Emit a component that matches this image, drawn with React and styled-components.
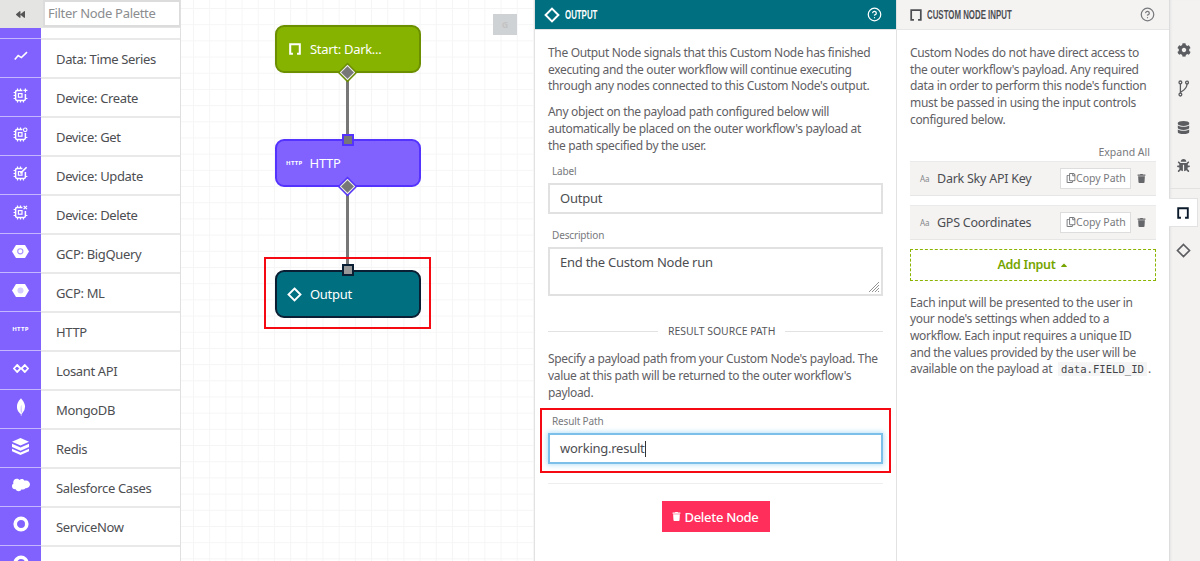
import React from 'react';
import styled, { createGlobalStyle } from 'styled-components';
import { FaCog, FaDatabase, FaBug, FaTrash, FaRegCopy, FaCaretUp, FaBackward } from 'react-icons/fa';
import { SiMongodb, SiSalesforce } from 'react-icons/si';
import { LuCircleHelp } from 'react-icons/lu';

const FONT = '"Noto Sans", "Open Sans", sans-serif';

const GlobalStyle = createGlobalStyle`
  html, body { margin: 0; padding: 0; height: 561px; overflow: hidden; background: #fff; }
  * { box-sizing: border-box; }
  body { font-family: ${FONT}; color: #55565a; }
`;

const Page = styled.div`
  display: grid;
  grid-template-columns: 181px 354px 362px 272px 31px;
  height: 561px;
  overflow: hidden;
`;

/* palette */
const Palette = styled.aside`
  display: flex;
  flex-direction: column;
  height: 561px;
  overflow: hidden;
  border-right: 1px solid #e0e0e0;
`;

const PaletteHead = styled.div`
  display: flex;
  flex: none;
  height: 28px;
  background: #e4e4e3;
`;

const Collapse = styled.div`
  display: flex;
  align-items: center;
  justify-content: center;
  width: 41px;
  color: #555;
  font-size: 9px;
`;

const Filter = styled.div`
  flex: 1;
  margin: 0 0 1px 2px;
  padding-left: 3px;
  background: #fff;
  border: 2px solid #dcdcdc;
  border-right-width: 1px;
  font-size: 13px;
  letter-spacing: -0.3px;
  line-height: 23px;
  color: #8b8d8f;
`;

const Stub = styled.div`
  flex: none;
  height: 10px;
  background: linear-gradient(to right, #8162ff 41px, #fff 41px);
`;

const Item = styled.div`
  display: flex;
  flex: none;
  height: 39px;
`;

const ItemIcon = styled.div`
  display: flex;
  align-items: center;
  justify-content: center;
  flex: none;
  width: 41px;
  padding-bottom: 4px;
  background: #8162ff;
  border-top: 1px solid #c4b6ff;
  color: #fff;
`;

const ItemLabel = styled.div`
  flex: 1;
  padding: 0 0 0 15px;
  border-top: 2px solid #e9e9e9;
  font-size: 13px;
  letter-spacing: -0.35px;
  line-height: 39px;
  color: #4d4e52;
`;

const HttpMark = styled.span`
  font-size: 6px;
  font-weight: 700;
  letter-spacing: 0.3px;
  color: #fff;
`;

/* canvas */
const Canvas = styled.main`
  position: relative;
  background-color: #fff;
  background-image:
    linear-gradient(#f5f5f5 1px, transparent 1px),
    linear-gradient(90deg, #f5f5f5 1px, transparent 1px);
  background-size: 16.2px 16.2px;
  background-position: 12px 8px;
  border-right: 1px solid #e2e2e2;
`;

const Node = styled.div`
  position: absolute;
  left: 94px;
  top: ${(p) => p.$top}px;
  display: flex;
  align-items: center;
  gap: ${(p) => p.$gap}px;
  width: 146px;
  height: 48px;
  padding-left: ${(p) => p.$pad}px;
  border: 2px solid ${(p) => p.$edge};
  border-radius: 9px;
  background: ${(p) => p.$fill};
  color: #fff;
  font-size: 13px;
  letter-spacing: -0.3px;
`;

const Wire = styled.div`
  position: absolute;
  left: 165px;
  top: ${(p) => p.$top}px;
  width: 3px;
  height: ${(p) => p.$height}px;
  background: #777;
`;

const OutPort = styled.div`
  position: absolute;
  left: 161px;
  top: ${(p) => p.$top}px;
  width: 11px;
  height: 11px;
  transform: rotate(45deg);
  background: #777;
  border: 1.5px solid #eee;
  box-shadow: 0 0 0 1.5px ${(p) => p.$edge};
`;

const InPort = styled.div`
  position: absolute;
  left: 161px;
  top: ${(p) => p.$top}px;
  width: 12px;
  height: 12px;
  background: ${(p) => p.$fill};
  border: 2px solid ${(p) => p.$edge};
`;

const NodeHighlight = styled.div`
  position: absolute;
  left: 83px;
  top: 257px;
  width: 167px;
  height: 72px;
  border: 2px solid #f50a14;
`;

const GhostButton = styled.div`
  position: absolute;
  left: 312px;
  top: 14px;
  width: 24px;
  height: 21px;
  background: #cfd2d4;
  color: #c3c3c3;
  font-size: 9px;
  font-weight: 700;
  line-height: 21px;
  text-align: center;
`;

/* shared panel parts */
const Panel = styled.section`
  display: flex;
  flex-direction: column;
  height: 561px;
  overflow: hidden;
  border-right: ${(p) => (p.$edge ? '1px solid #e2e2e2' : 'none')};
`;

const PanelHead = styled.header`
  display: flex;
  align-items: center;
  flex: none;
  height: 30px;
  padding: 0 14px 0 ${(p) => p.$left}px;
  background: ${(p) => p.$bg};
  border-bottom: 1px solid ${(p) => p.$line};
  color: ${(p) => p.$color};
`;

const PanelTitle = styled.h2`
  flex: 1;
  margin: 0 0 0 ${(p) => p.$gap}px;
  font-family: "Liberation Sans", sans-serif;
  font-size: 12.5px;
  font-weight: 700;
  transform: scaleX(0.63);
  transform-origin: left center;
  white-space: nowrap;
`;

const Para = styled.p`
  margin: ${(p) => p.$top || 0}px 0 0;
  font-size: 12px;
  letter-spacing: -0.33px;
  line-height: 16.7px;
  color: #5f6064;
  white-space: nowrap;
`;

const Body = styled.div`
  padding: 0 13px;
`;

/* output panel */
const FieldLabel = styled.label`
  display: block;
  margin: ${(p) => p.$top}px 0 0 4px;
  font-size: 10px;
  letter-spacing: -0.15px;
  line-height: 14px;
  color: #77797d;
`;

const Input = styled.div`
  position: relative;
  height: ${(p) => p.$height || 31}px;
  margin-top: 5px;
  padding: ${(p) => (p.$area ? 4 : 0)}px 10px 0;
  border: 2px solid ${(p) => (p.$focus ? '#7cc0ea' : '#e1e1e1')};
  box-shadow: ${(p) => (p.$focus ? '0 0 5px 1px #b9e0f7' : 'none')};
  font-size: 13px;
  letter-spacing: -0.25px;
  line-height: ${(p) => (p.$area ? 18 : 27)}px;
  color: #4d4e52;
`;

const Caret = styled.span`
  display: inline-block;
  width: 1px;
  height: 16px;
  vertical-align: -4px;
  background: #333;
`;

const Grip = styled.svg`
  position: absolute;
  right: 1px;
  bottom: 1px;
`;

const SectionRule = styled.div`
  display: flex;
  align-items: center;
  gap: 10px;
  margin-top: 28px;
  font-size: 10.4px;
  line-height: 14px;
  color: #55565a;
  &::before, &::after { content: ''; flex: 1; height: 1px; background: #e2e2e2; }
  &::before { flex: none; width: 110px; }
`;

const Highlight = styled.div`
  height: 65px;
  margin: 7px -8px 0;
  padding: 4px 6px 9px;
  border: 2px solid #f50a14;
`;

const Rule = styled.div`
  height: 1px;
  margin-top: 10px;
  background: #eee;
`;

const DangerButton = styled.button`
  display: flex;
  align-items: center;
  justify-content: center;
  gap: 3px;
  width: 108px;
  height: 31px;
  margin: 17px auto 0;
  padding: 0;
  border: 0;
  background: #ff2e5b;
  color: #fff;
  font-family: ${FONT};
  font-size: 13px;
  font-weight: 500;
  letter-spacing: -0.3px;
`;

/* custom node input panel */
const ExpandAll = styled.div`
  margin: 16px 0 0;
  padding-right: 6px;
  font-size: 10.5px;
  line-height: 14px;
  color: #77797d;
  text-align: right;
`;

const InputCard = styled.div`
  display: flex;
  align-items: center;
  height: 35px;
  margin-top: ${(p) => p.$top}px;
  padding: 0 10px;
  background: #f4f3f2;
  border-bottom: 1px solid #e6e6e6;
  border-top: 1px solid #eaeaea;
`;

const TypeMark = styled.span`
  width: 17px;
  font-size: 8px;
  color: #85878a;
`;

const CardName = styled.span`
  flex: 1;
  font-size: 12.5px;
  letter-spacing: -0.25px;
  color: #4d4e52;
`;

const CopyPath = styled.span`
  display: flex;
  align-items: center;
  width: 71px;
  height: 21px;
  padding-left: 5px;
  margin-right: 6px;
  background: #fff;
  border: 1px solid #ddd;
  font-size: 10.5px;
  color: #77797d;
  white-space: nowrap;
`;

const AddInput = styled.div`
  display: flex;
  align-items: center;
  justify-content: center;
  gap: 3px;
  height: 32px;
  margin-top: 9px;
  border: 1px dashed #8ab400;
  color: #76a500;
  font-size: 12.5px;
  font-weight: 600;
  letter-spacing: -0.3px;
`;

const Code = styled.code`
  padding: 1px 3px;
  margin: 0 1px 0 3px;
  background: #f5f5f5;
  font-family: "DejaVu Sans Mono", monospace;
  font-size: 10.6px;
  letter-spacing: 0;
  color: #44454a;
`;

/* far right rail */
const Rail = styled.nav`
  display: flex;
  flex-direction: column;
  height: 561px;
  padding-top: 31px;
  background: #f3f2f1;
  border-left: 1px solid #ddd;
  box-shadow: inset 2px 0 2px -1px #e5e5e5;
  color: #5c5d60;
`;

const RailIcon = styled.div`
  display: flex;
  align-items: center;
  justify-content: center;
  flex: none;
  width: 27px;
  height: 38.5px;
  margin-top: ${(p) => p.$top || 0}px;
`;

const RailDivider = styled.div`
  flex: none;
  height: 1px;
  margin-top: 3px;
  background: #e2e2e2;
`;

const RailTab = styled.div`
  display: flex;
  align-items: center;
  justify-content: center;
  flex: none;
  width: 29px;
  height: 29px;
  margin: 9px 0 0 -1px;
  background: #fff;
  border: 1px solid #e2e2e2;
  border-left: 0;
  color: #0b1a2b;
`;

/* drawn icons */
const CustomNodeIcon = ({ size = 12, weight = 2.4 }) => (
  <svg width={size} height={size} viewBox="0 0 14 14" fill="none" stroke="currentColor" strokeWidth={weight}>
    <path d="M4.6 12.6H1.4V1.4h11.2v11.2H9.4" />
  </svg>
);

const DiamondIcon = ({ size = 15, weight = 2 }) => (
  <svg width={size} height={size} viewBox="0 0 16 16" fill="none" stroke="currentColor" strokeWidth={weight}>
    <path d="M8 1.6 14.4 8 8 14.4 1.6 8Z" />
  </svg>
);

const BranchIcon = () => (
  <svg width="11" height="17" viewBox="0 0 11 17" fill="none" stroke="currentColor" strokeWidth="1.3">
    <path d="M2.4 3.4V13.2M9 4C9 9 5.4 10.4 2.4 12.4" />
    <circle cx="2.4" cy="2.4" r="1.4" />
    <circle cx="9" cy="2.6" r="1.4" />
    <circle cx="2.4" cy="14.6" r="1.4" />
  </svg>
);

const PINS = 'M4.5 .6v2M7.5 .6v2M.6 4.5h2M.6 7.5h2M.6 10.5h2M4.5 12.4v2M7.5 12.4v2M10.5 12.4v2M12.4 10.5h2';

const Chip = ({ badge }) => (
  <svg width="15" height="15" viewBox="0 0 15 15" fill="none" stroke="#fff">
    <path d={PINS} strokeWidth="1.2" />
    <path d="M9.4 2.6H4a1.4 1.4 0 0 0-1.4 1.4v7A1.4 1.4 0 0 0 4 12.4h7a1.4 1.4 0 0 0 1.4-1.4V6" strokeWidth="1.5" />
    <rect x="5.4" y="5.6" width="3.6" height="3.6" strokeWidth="1.2" />
    {badge}
  </svg>
);

const TrendIcon = () => (
  <svg width="14" height="10" viewBox="0 0 14 10" fill="none" stroke="#fff" strokeWidth="1.6">
    <path d="M.8 8.6 4.2 4.6 7.4 6.6 13 1.2" />
  </svg>
);

const Hexagon = ({ children }) => (
  <svg width="17" height="13" viewBox="0 0 17 13">
    <path d="M4 0h9L17 6.5 13 13H4L0 6.5Z" fill="#fff" />
    {children}
  </svg>
);

const LosantIcon = () => (
  <svg width="16" height="9" viewBox="0 0 16 9" fill="none" stroke="#fff" strokeWidth="1.8">
    <path d="M4.2 1 7.6 4.5 4.2 8 .9 4.5ZM11.8 1 15.1 4.5 11.8 8 8.4 4.5Z" />
  </svg>
);

const StackIcon = () => (
  <svg width="17" height="17" viewBox="0 0 17 17" fill="#fff">
    <path d="M8.5 0 17 3.8 8.5 7.6 0 3.8Z" />
    <path d="M0 5.8 8.5 9.6 17 5.8V9L8.5 12.8 0 9Z" />
    <path d="M0 10.8 8.5 14.6 17 10.8V13.2L8.5 17 0 13.2Z" />
  </svg>
);

const NowIcon = () => (
  <svg width="16" height="16" viewBox="0 0 16 16" fill="none" stroke="#fff" strokeWidth="3.6">
    <circle cx="8" cy="8" r="5.8" />
  </svg>
);

const CHIP_BADGES = {
  create: <path d="M12.4 .4v4M10.4 2.4h4" strokeWidth="1.2" />,
  get: <circle cx="12.2" cy="2.8" r="1.8" strokeWidth="1.1" />,
  update: <path d="M7.4 7.4 13.6 1.2" strokeWidth="1.6" />,
  remove: <path d="M10.6 .8l3.4 3.4M14 .8l-3.4 3.4" strokeWidth="1.2" />,
};

const PALETTE = [
  ['Data: Time Series', <TrendIcon />],
  ['Device: Create', <Chip badge={CHIP_BADGES.create} />],
  ['Device: Get', <Chip badge={CHIP_BADGES.get} />],
  ['Device: Update', <Chip badge={CHIP_BADGES.update} />],
  ['Device: Delete', <Chip badge={CHIP_BADGES.remove} />],
  ['GCP: BigQuery', <Hexagon><circle cx="8.3" cy="6.3" r="2.6" fill="none" stroke="#a892ff" strokeWidth="1.1" /></Hexagon>],
  ['GCP: ML', <Hexagon><circle cx="8.5" cy="6.5" r="3" fill="#d5ccff" /></Hexagon>],
  ['HTTP', <HttpMark>HTTP</HttpMark>],
  ['Losant API', <LosantIcon />],
  ['MongoDB', <SiMongodb size={18} />],
  ['Redis', <StackIcon />],
  ['Salesforce Cases', <SiSalesforce size={18} />],
  ['ServiceNow', <NowIcon />],
  ['ServiceNow: Update', <NowIcon />],
];

const GREEN = { $fill: '#86b300', $edge: '#6c8f00' };
const PURPLE = { $fill: '#8162ff', $edge: '#5533ff' };
const TEAL = { $fill: '#007080', $edge: '#0a1f33' };

export default function App() {
  return (
    <Page>
      <GlobalStyle />

      <Palette>
        <PaletteHead>
          <Collapse><FaBackward /></Collapse>
          <Filter>Filter Node Palette</Filter>
        </PaletteHead>
        <Stub />
        {PALETTE.map(([name, icon]) => (
          <Item key={name}>
            <ItemIcon>{icon}</ItemIcon>
            <ItemLabel>{name}</ItemLabel>
          </Item>
        ))}
      </Palette>

      <Canvas>
        <GhostButton>G</GhostButton>
        <Wire $top={73} $height={66} />
        <Wire $top={187} $height={83} />
        <Node {...GREEN} $top={25} $gap={9} $pad={12}>
          <CustomNodeIcon />
          <span>Start: Dark...</span>
        </Node>
        <Node {...PURPLE} $top={139} $gap={7} $pad={9}>
          <HttpMark>HTTP</HttpMark>
          <span>HTTP</span>
        </Node>
        <Node {...TEAL} $top={270} $gap={8} $pad={10}>
          <DiamondIcon />
          <span>Output</span>
        </Node>
        <OutPort {...GREEN} $top={67} />
        <InPort $fill="#777" $edge="#5533ff" $top={134} />
        <OutPort {...PURPLE} $top={181} />
        <InPort $fill="#999" $edge="#0a1f33" $top={264} />
        <NodeHighlight />
      </Canvas>

      <Panel $edge>
        <PanelHead $left={9} $bg="#007080" $line="#e2e2e2" $color="#fff">
          <DiamondIcon size={16} />
          <PanelTitle $gap={5}>OUTPUT</PanelTitle>
          <LuCircleHelp size={15} />
        </PanelHead>
        <Body>
          <Para $top={15}>
            The Output Node signals that this Custom Node has finished<br />
            executing and the outer workflow will continue executing<br />
            through any nodes connected to this Custom Node's output.
          </Para>
          <Para $top={9}>
            Any object on the payload path configured below will<br />
            automatically be placed on the outer workflow's payload at<br />
            the path specified by the user.
          </Para>
          <FieldLabel $top={10}>Label</FieldLabel>
          <Input>Output</Input>
          <FieldLabel $top={14}>Description</FieldLabel>
          <Input $area $height={49}>
            End the Custom Node run
            <Grip width="12" height="12" viewBox="0 0 12 12" stroke="#777" strokeWidth="0.8">
              <path d="M1 11 11 1M4 11 11 4M7 11 11 7M10 11 11 10" />
            </Grip>
          </Input>
          <SectionRule>RESULT SOURCE PATH</SectionRule>
          <Para $top={13}>
            Specify a payload path from your Custom Node's payload. The<br />
            value at this path will be returned to the outer workflow's<br />
            payload.
          </Para>
          <Highlight>
            <FieldLabel $top={0}>Result Path</FieldLabel>
            <Input $focus>working.result<Caret /></Input>
          </Highlight>
          <Rule />
          <DangerButton><FaTrash size={9} />Delete Node</DangerButton>
        </Body>
      </Panel>

      <Panel>
        <PanelHead $left={13} $bg="#f4f3f2" $line="#e6e6e6" $color="#4d4e52">
          <CustomNodeIcon size={12} weight={2} />
          <PanelTitle $gap={5}>CUSTOM NODE INPUT</PanelTitle>
          <LuCircleHelp size={15} color="#77797d" />
        </PanelHead>
        <Body>
          <Para $top={15}>
            Custom Nodes do not have direct access to<br />
            the outer workflow's payload. Any required<br />
            data in order to perform this node's function<br />
            must be passed in using the input controls<br />
            configured below.
          </Para>
          <ExpandAll>Expand All</ExpandAll>
          <InputCard $top={2}>
            <TypeMark>Aa</TypeMark>
            <CardName>Dark Sky API Key</CardName>
            <CopyPath><FaRegCopy size={10} />Copy Path</CopyPath>
            <FaTrash size={9} color="#66676a" />
          </InputCard>
          <InputCard $top={9}>
            <TypeMark>Aa</TypeMark>
            <CardName>GPS Coordinates</CardName>
            <CopyPath><FaRegCopy size={10} />Copy Path</CopyPath>
            <FaTrash size={9} color="#66676a" />
          </InputCard>
          <AddInput>Add Input <FaCaretUp size={10} /></AddInput>
          <Para $top={14}>
            Each input will be presented to the user in<br />
            your node's settings when added to a<br />
            workflow. Each input requires a unique ID<br />
            and the values provided by the user will be<br />
            available on the payload at <Code>data.FIELD_ID</Code>.
          </Para>
        </Body>
      </Panel>

      <Rail>
        <RailIcon><FaCog size={14} /></RailIcon>
        <RailIcon><BranchIcon /></RailIcon>
        <RailIcon><FaDatabase size={13} /></RailIcon>
        <RailIcon><FaBug size={13} /></RailIcon>
        <RailDivider />
        <RailTab><CustomNodeIcon size={12} weight={2.2} /></RailTab>
        <RailIcon $top={4}><DiamondIcon size={15} weight={1.8} /></RailIcon>
      </Rail>
    </Page>
  );
}
